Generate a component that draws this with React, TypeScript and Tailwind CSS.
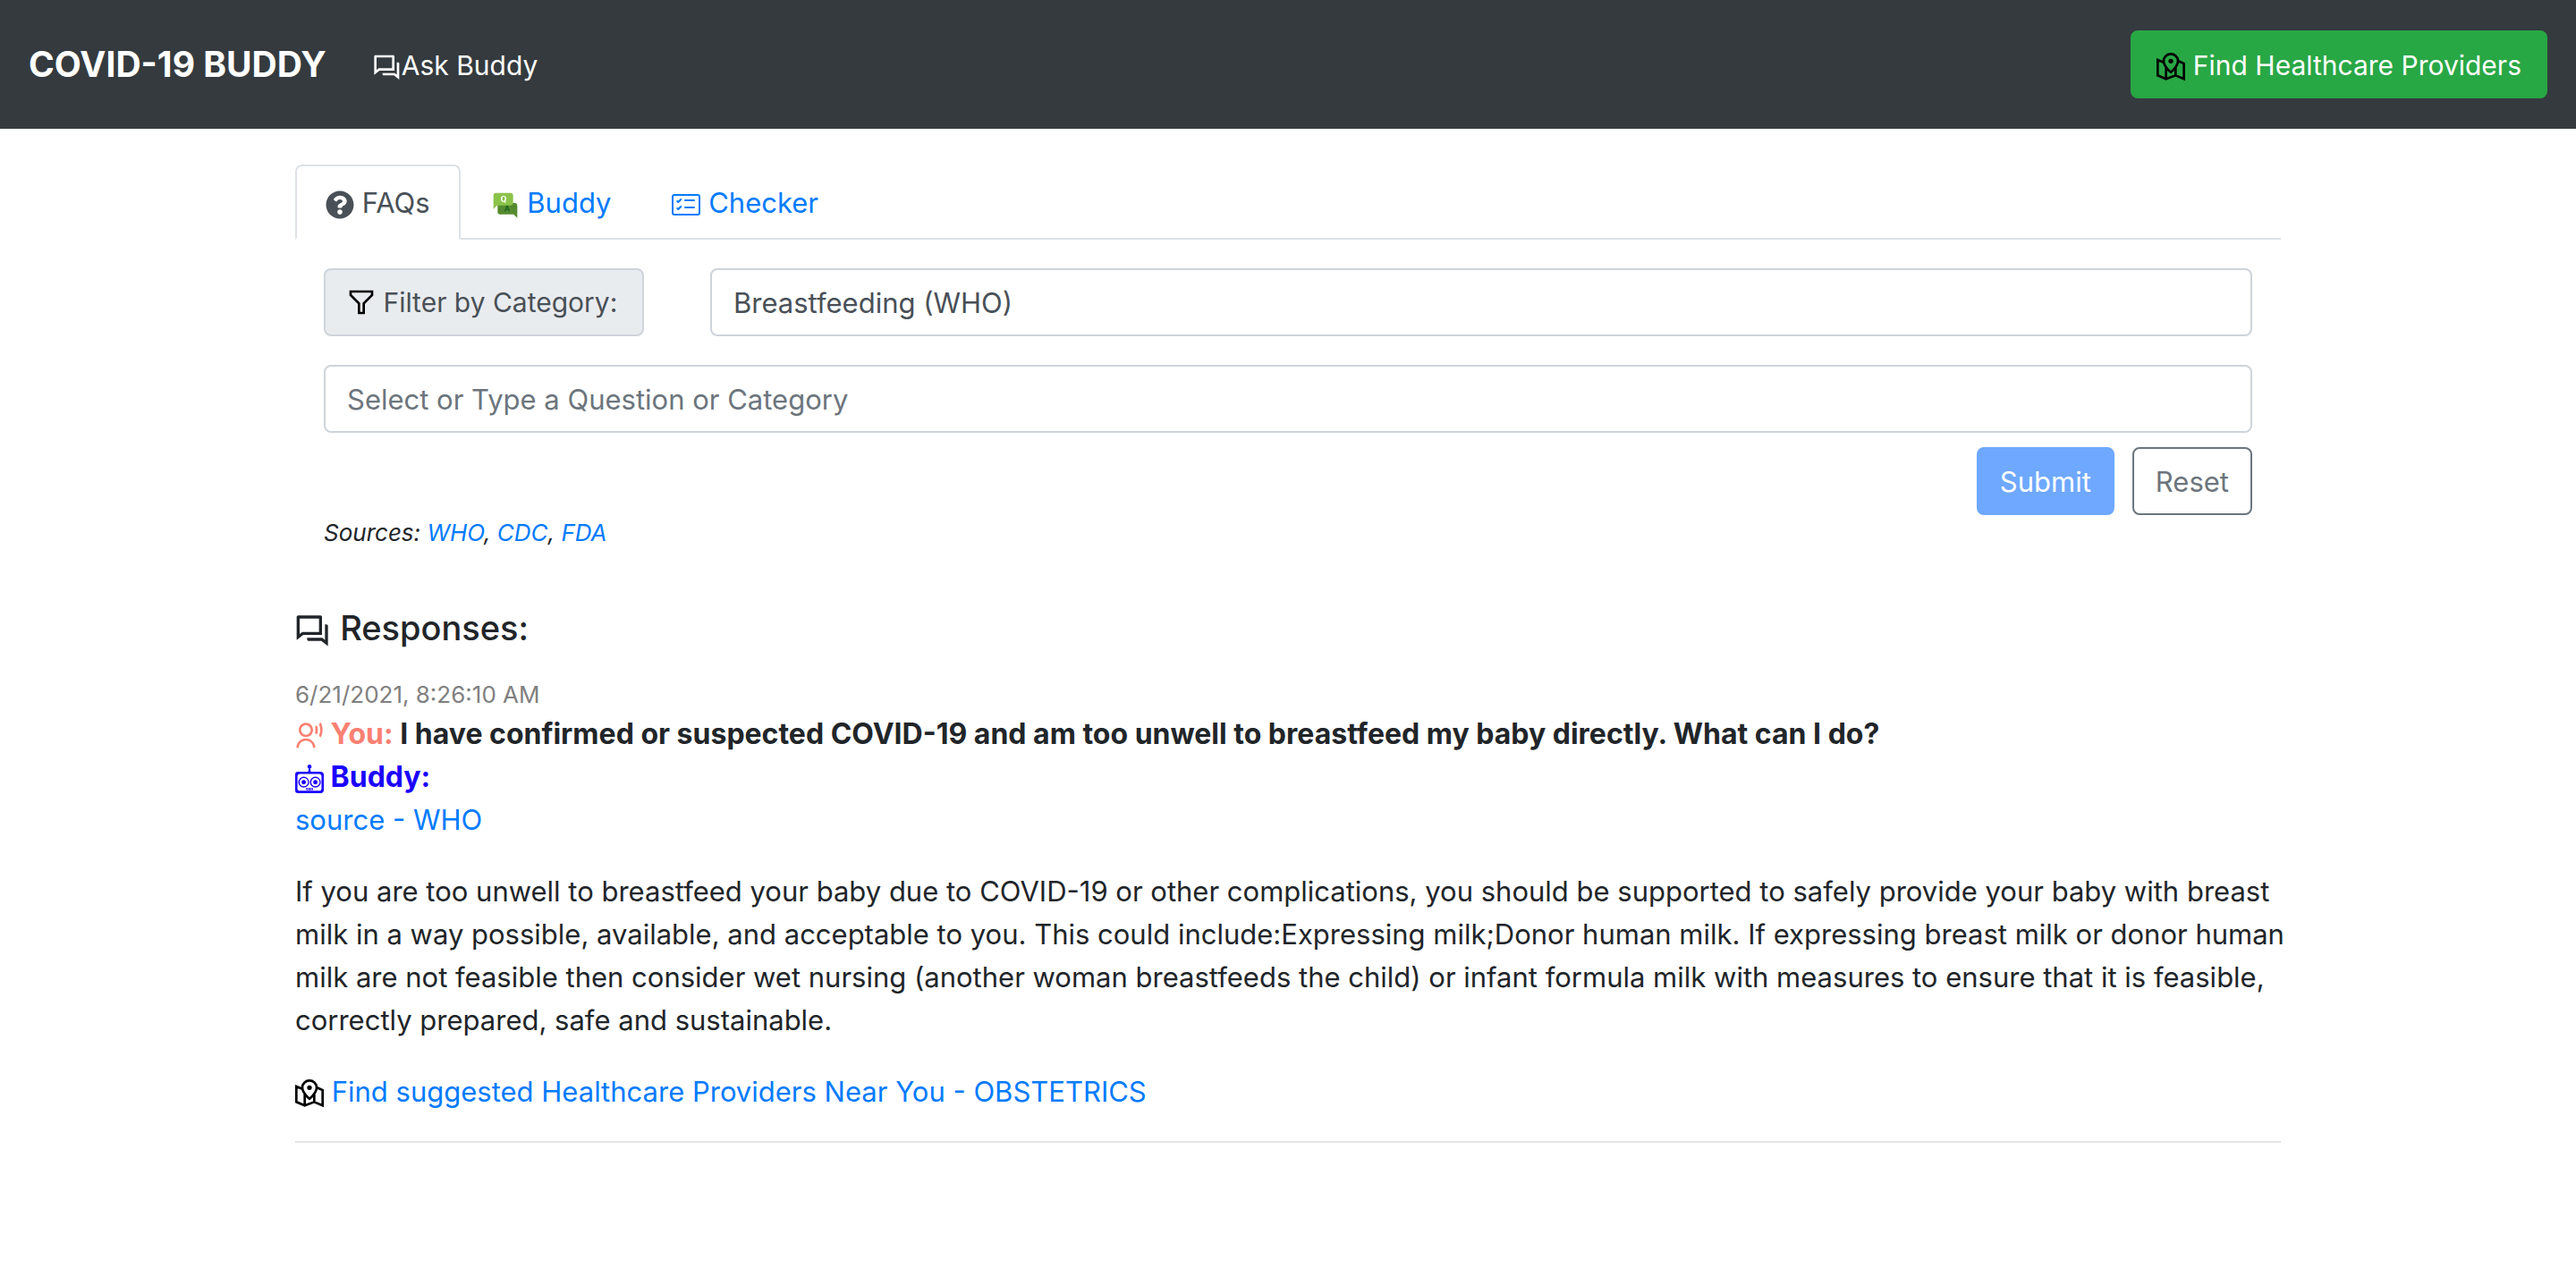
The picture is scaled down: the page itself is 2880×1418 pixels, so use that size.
import { useState } from "react";
import type { ReactNode } from "react";
import { GrMapLocation, GrFilter } from "react-icons/gr";
import { FaQuestionCircle } from "react-icons/fa";
import { FcFaq } from "react-icons/fc";
import { BsCardChecklist } from "react-icons/bs";
import { RiQuestionAnswerLine, RiUserVoiceLine } from "react-icons/ri";
import { SiProbot } from "react-icons/si";

const icon = "inline-block size-8 align-[-7px]";
const blackIcon = "inline-block size-8 align-[-7px] text-black [&_path]:stroke-black";

function TextLink({ children }: { children: ReactNode }) {
  return (
    <a href="#" className="text-[#007bff] hover:underline">
      {children}
    </a>
  );
}

function Tab({ active, onSelect, children }: { active: boolean; onSelect: () => void; children: ReactNode }) {
  return (
    <button
      type="button"
      role="tab"
      aria-selected={active}
      onClick={onSelect}
      className={
        active
          ? "-mb-0.5 rounded-t-lg border-2 border-[#dee2e6] border-b-white bg-white px-8 pt-[17px] pb-[15px] text-[#495057]"
          : "-mb-0.5 rounded-t-lg border-2 border-transparent px-8 pt-[17px] pb-[15px] text-[#007bff]"
      }
    >
      {children}
    </button>
  );
}

export default function App() {
  const [tab, setTab] = useState("faqs");
  const [category, setCategory] = useState("Breastfeeding (WHO)");
  const [question, setQuestion] = useState("");

  return (
    <div className="bg-white font-['Inter',sans-serif] text-[31px] leading-[48px] text-[#212529]">
      <header className="flex items-center bg-[#343a3e] px-8 py-[34px] text-white">
        <a href="#" className="mr-9 text-[39px] leading-[60px] font-bold">
          COVID-19 BUDDY
        </a>
        <nav className="px-4 pt-0.5 text-[30px]">
          <a href="#">
            <RiQuestionAnswerLine className={icon} />
            Ask Buddy
          </a>
        </nav>
        <button
          type="button"
          className="ml-auto rounded-lg border-2 border-[#28a745] bg-[#28a745] px-[27px] pt-[13px] pb-[11px] text-[30px]"
        >
          <GrMapLocation className={blackIcon} /> Find Healthcare Providers
        </button>
      </header>

      <main className="mx-auto mt-10 max-w-[2220px]">
        <div role="tablist" className="flex border-b-2 border-[#dee2e6]">
          <Tab active={tab === "faqs"} onSelect={() => setTab("faqs")}>
            <FaQuestionCircle className={icon} /> FAQs
          </Tab>
          <Tab active={tab === "buddy"} onSelect={() => setTab("buddy")}>
            <FcFaq className={icon} /> Buddy
          </Tab>
          <Tab active={tab === "checker"} onSelect={() => setTab("checker")}>
            <BsCardChecklist className={icon} /> Checker
          </Tab>
        </div>

        <form className="px-8 pt-8" onSubmit={(e) => e.preventDefault()}>
          <div className="flex gap-[74px]">
            <label
              htmlFor="category"
              className="w-[358px] rounded-lg border-2 border-[#ced4da] bg-[#e9ecef] py-3 pl-6 text-[30px] whitespace-nowrap text-[#495057]"
            >
              <GrFilter className="inline-block size-8 align-[-5px] text-black [&_path]:stroke-black [&_polygon]:stroke-black" />{" "}
              Filter by Category:
            </label>
            <input
              id="category"
              value={category}
              onChange={(e) => setCategory(e.target.value)}
              className="h-[76px] min-w-0 flex-1 rounded-lg border-2 border-[#ced4da] px-6 text-[#495057]"
            />
          </div>
          <input
            aria-label="Question or category"
            placeholder="Select or Type a Question or Category"
            value={question}
            onChange={(e) => setQuestion(e.target.value)}
            className="mt-8 block h-[76px] w-full rounded-lg border-2 border-[#ced4da] px-6 text-[#495057] placeholder:text-[#6c757d]"
          />
          <div className="mt-4 flex justify-end gap-5">
            <button
              type="submit"
              className="rounded-lg border-2 border-[#6ea8ff] bg-[#6ea8ff] px-6 pt-[13px] pb-[11px] text-white"
            >
              Submit
            </button>
            <button type="reset" className="rounded-lg border-2 border-[#6c757d] px-6 pt-[13px] pb-[11px] text-[#6c757d]">
              Reset
            </button>
          </div>
          <p className="text-[26px] leading-10 italic">
            Sources: <TextLink>WHO</TextLink>, <TextLink>CDC</TextLink>, <TextLink>FDA</TextLink>
          </p>
        </form>

        <section className="mt-[62px]">
          <h2 className="text-[38px] leading-[48px] font-medium">
            <RiQuestionAnswerLine className="inline-block size-10 align-[-9px]" /> Responses:
          </h2>
          <article className="mt-[31px] border-b-2 border-black/10 pb-[31px]">
            <time className="block text-[26px] leading-10 text-[#808080]">6/21/2021, 8:26:10 AM</time>
            <p className="text-[32px] font-bold">
              <span className="text-[#fa8072]">
                <RiUserVoiceLine className={icon} /> You:
              </span>{" "}
              I have confirmed or suspected COVID-19 and am too unwell to breastfeed my baby directly. What can I do?
            </p>
            <p className="text-[32px] font-bold text-[#1b00ff]">
              <SiProbot className={icon} /> Buddy:
            </p>
            <p>
              <TextLink>source - WHO</TextLink>
            </p>
            <p className="my-8 -mr-4">
              If you are too unwell to breastfeed your baby due to COVID-19 or other complications, you should be
              supported to safely provide your baby with breast milk in a way possible, available, and acceptable to
              you. This could include:Expressing milk;Donor human milk. If expressing breast milk or donor human milk
              are not feasible then consider wet nursing (another woman breastfeeds the child) or infant formula milk
              with measures to ensure that it is feasible, correctly prepared, safe and sustainable.
            </p>
            <p>
              <GrMapLocation className={blackIcon} />{" "}
              <TextLink>Find suggested Healthcare Providers Near You - OBSTETRICS</TextLink>
            </p>
          </article>
        </section>
      </main>
    </div>
  );
}
